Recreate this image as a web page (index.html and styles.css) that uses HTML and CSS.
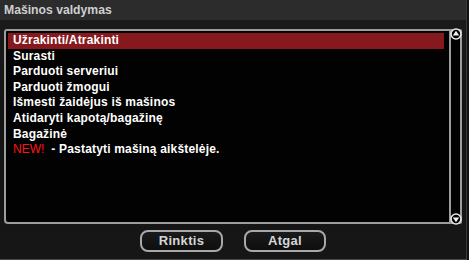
FILE: index.html
```html
<!DOCTYPE html>
<html lang="lt">
<head>
<meta charset="utf-8">
<title>Mašinos valdymas</title>
<link rel="stylesheet" href="styles.css">
</head>
<body>
<div class="window">
  <div class="title">Mašinos valdymas</div>
  <div class="body">
    <div class="listbox">
      <ul class="list">
        <li class="row selected">Užrakinti/Atrakinti</li>
        <li class="row">Surasti</li>
        <li class="row">Parduoti serveriui</li>
        <li class="row">Parduoti žmogui</li>
        <li class="row">Išmesti žaidėjus iš mašinos</li>
        <li class="row">Atidaryti kapotą/bagažinę</li>
        <li class="row">Bagažinė</li>
        <li class="row"><span class="new">NEW!</span>&nbsp; - Pastatyti mašiną aikštelėje.</li>
      </ul>
      <div class="scrollbar">
        <svg class="arrow arrow-up" width="12" height="12" viewBox="0 0 12 12">
          <circle cx="6" cy="6" r="5" fill="#000" stroke="#e8e8e8" stroke-width="1.6"/>
          <path d="M6 2.8 L9.2 7.6 L2.8 7.6 Z" fill="#f2f2f2"/>
        </svg>
        <svg class="arrow arrow-down" width="12" height="12" viewBox="0 0 12 12">
          <circle cx="6" cy="6" r="5" fill="#000" stroke="#e8e8e8" stroke-width="1.6"/>
          <path d="M2.8 4.4 L9.2 4.4 L6 9.2 Z" fill="#f2f2f2"/>
        </svg>
      </div>
    </div>
    <div class="buttons">
      <div class="btn btn-select">Rinktis</div>
      <div class="btn btn-back">Atgal</div>
    </div>
  </div>
</div>
</body>
</html>
```
FILE: styles.css
```css
html, body {
  margin: 0;
  padding: 0;
  background: #111111;
}

.window {
  width: 466px;
  height: 259px;
  border-right: 1px solid #3a3a3a;
  border-bottom: 1px solid #4a4a4a;
  background: linear-gradient(180deg, #1c1c1c 0%, #141414 40%, #161616 100%);
  display: flex;
  flex-direction: column;
  font-family: "Liberation Sans", Arial, sans-serif;
}

.title {
  height: 20px;
  line-height: 20px;
  padding-left: 4px;
  background: #2c2c2c;
  color: #cfcfcf;
  font-weight: bold;
  font-size: 12.2px;
}

.body {
  padding: 9px 4px 0 4px;
  display: flex;
  flex-direction: column;
}

.listbox {
  height: 195px;
  box-sizing: border-box;
  border: 2px solid #9d9d9d;
  border-radius: 3px 2px 2px 4px;
  background: #020202;
  display: flex;
}

.list {
  flex: 1;
  margin: 0;
  padding: 2px 5px 0 2px;
  list-style: none;
}

.row {
  height: 15.6px;
  line-height: 15.6px;
  padding-left: 5px;
  color: #ffffff;
  font-weight: bold;
  font-size: 12px;
  letter-spacing: 0.18px;
  white-space: nowrap;
}

.row.selected {
  background: #86191e;
}

.new {
  color: #ff1212;
  font-weight: normal;
  letter-spacing: 0;
}

.scrollbar {
  position: relative;
  width: 11px;
  box-sizing: border-box;
  border-left: 2px solid #9d9d9d;
}

.arrow {
  position: absolute;
  left: -1px;
  display: block;
}

.arrow-up {
  top: -3px;
}

.arrow-down {
  bottom: -3px;
}

.buttons {
  margin-top: 6px;
  display: flex;
  justify-content: center;
  gap: 21px;
}

.btn {
  height: 22px;
  box-sizing: border-box;
  border: 2px solid #a8a8a8;
  border-radius: 8px;
  background: linear-gradient(180deg, #1a1a1a, #0e0e0e);
  color: #d6d6d6;
  font-weight: bold;
  font-size: 13px;
  letter-spacing: 0.3px;
  line-height: 18px;
  text-align: center;
}

.btn-select {
  width: 83px;
}

.btn-back {
  width: 82px;
}
```
